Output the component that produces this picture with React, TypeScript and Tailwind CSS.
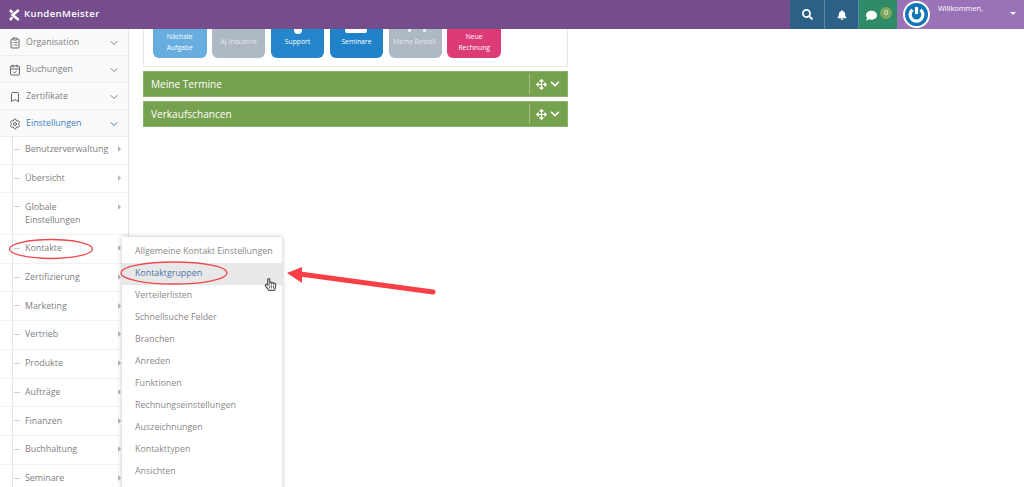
import React from "react";
import { ChevronDown, ClipboardList, CalendarCheck, Bookmark, Settings } from "lucide-react";
import { FaSearch, FaBell, FaComment, FaArrowsAlt, FaChevronDown, FaRegHandPointer } from "react-icons/fa";

const font = { fontFamily: '"Open Sans", sans-serif' };

const topItems = [
  { label: "Organisation", Icon: ClipboardList },
  { label: "Buchungen", Icon: CalendarCheck },
  { label: "Zertifikate", Icon: Bookmark },
];
const subItems = ["Benutzerverwaltung", "Übersicht", "Globale Einstellungen", "Kontakte", "Zertifizierung", "Marketing", "Vertrieb", "Produkte", "Aufträge", "Finanzen", "Buchhaltung", "Seminare"];
const menuItems = ["Allgemeine Kontakt Einstellungen", "Kontaktgruppen", "Verteilerlisten", "Schnellsuche Felder", "Branchen", "Anreden", "Funktionen", "Rechnungseinstellungen", "Auszeichnungen", "Kontakttypen", "Ansichten"];

function Tile({ lines, bg, glyph, faint }: { lines: string[]; bg: string; glyph?: React.ReactNode; faint?: boolean }) {
  return (
    <div className={`relative w-[53.5px] h-[50px] rounded-[6px] flex flex-col justify-end pb-[4px] text-[6.8px] leading-[11px] text-center ${bg} ${faint ? "text-white/70" : "text-white"}`}>
      {glyph}
      <div className="h-[25px] flex flex-col justify-center items-center">
        {lines.map((l) => <span key={l}>{l}</span>)}
      </div>
    </div>
  );
}

function Panel({ title }: { title: string }) {
  return (
    <div className="h-[26px] bg-[#76a14f] border border-[#8fb36e] flex items-center text-white">
      <span className="flex-1 pl-[7px] pt-[1px] text-[10.1px]">{title}</span>
      <span className="w-px h-[20px] bg-[#a3c088]" />
      <span className="w-[37px] flex items-center justify-center gap-[3px]">
        <FaArrowsAlt size={11} />
        <FaChevronDown size={10} />
      </span>
    </div>
  );
}

export default function App() {
  return (
    <div className="relative h-[487px] w-[1024px] overflow-hidden bg-white" style={font}>
      <header className="relative z-10 h-[29px] bg-[#754c8c] flex items-stretch text-white">
        <div className="flex-1 flex items-center pl-[9px] gap-[4px]">
          <svg width="11" height="12" viewBox="0 0 11 12" fill="none" stroke="white" strokeWidth="2.6">
            <path d="M9.8 1 L3.6 6 L9.8 11" />
            <path d="M1 1 L3.4 3.6 M1 11 L3.4 8.4" />
          </svg>
          <span className="text-[9.6px] font-semibold tracking-[0.35px]">KundenMeister</span>
        </div>
        <div className="w-[35px] bg-[#2c6187] flex items-center justify-center border-r border-[#5d86a3]"><FaSearch size={11} /></div>
        <div className="w-[34px] bg-[#2c6187] flex items-center justify-center border-r border-[#5d86a3]"><FaBell size={10} /></div>
        <div className="w-[38px] bg-[#2f8b67] flex items-center pl-[7px] gap-[3px]">
          <FaComment size={11} className="mt-[2px]" />
          <span className="w-[12px] h-[12px] -mt-[3px] rounded-full bg-[#7ea85c] text-[7px] flex items-center justify-center">0</span>
        </div>
        <div className="w-[127px] bg-[#9a72b8] flex items-start pl-[6px]">
          <svg className="mt-[1px]" width="27" height="27" viewBox="0 0 27 27" fill="none">
            <circle cx="13.5" cy="13.5" r="13.5" fill="white" />
            <circle cx="13.5" cy="13.5" r="11.5" fill="#1275b5" />
            <path d="M9.5 8.7 A6.4 6.4 0 1 0 17.5 8.7" stroke="white" strokeWidth="3.2" />
            <path d="M13.5 6 V13" stroke="white" strokeWidth="3.2" />
          </svg>
          <span className="ml-[8px] mt-[3px] flex-1 text-[7.4px] leading-[11px]">Willkommen,</span>
          <span className="mt-[12px] mr-[8px] w-0 h-0 border-x-[3.5px] border-x-transparent border-t-[3.5px] border-t-white" />
        </div>
      </header>

      <div className="flex items-start">
        <aside className="w-[129px] shrink-0 h-[458px] overflow-hidden border-r border-[#e6e9ee] text-[#808080]">
          {topItems.map(({ label, Icon }) => (
            <div key={label} className="h-[27px] bg-[#fafafa] border-b border-[#eeeeee] flex items-center pl-[9px] pr-[8px] pt-[1px] text-[8.85px]">
              <Icon size={12} className="text-[#666]" />
              <span className="ml-[5px] flex-1">{label}</span>
              <ChevronDown size={12} strokeWidth={2} className="text-[#808080]" />
            </div>
          ))}
          <div className="h-[27px] bg-[#fafafa] border-b border-[#eeeeee] flex items-center pl-[9px] pr-[8px] pt-[1px] text-[8.85px] text-[#3a7fc4]">
            <Settings size={12} className="text-[#666]" />
            <span className="ml-[5px] flex-1">Einstellungen</span>
            <ChevronDown size={12} strokeWidth={2} />
          </div>
          <div className="ml-[12px] -mt-px border-l border-[#dbe7f3]">
            {subItems.map((s) => (
              <div key={s} className="relative flex items-start border-b border-[#f1f1f1] -ml-[12px] pl-[24px] pr-[7px] py-[7.35px] text-[8.85px] leading-[13px]">
                <span className="absolute left-[13px] top-[13px] w-[6px] h-px bg-[#cfcfcf]" />
                <span className="flex-1 whitespace-pre-line">{s === "Globale Einstellungen" ? "Globale\nEinstellungen" : s}</span>
                <span className="mt-[3px] w-0 h-0 border-y-[3px] border-y-transparent border-l-[3px] border-l-[#b5b5b5]" />
              </div>
            ))}
          </div>
        </aside>

        <main className="w-[424.5px] ml-[14px] -mt-[22px]">
          <div className="h-[60px] border border-[#e9e9e9] pl-[9px] flex gap-[5.4px]">
            <Tile lines={["Nächste", "Aufgabe"]} bg="bg-[#67ade0]" />
            <Tile lines={["AJ Industrie"]} bg="bg-[#aeb9c3]" faint />
            <Tile lines={["Support"]} bg="bg-[#2586cc]" glyph={<span className="absolute left-[23px] top-[19px] w-[8px] h-[7px] rounded-b-full bg-white" />} />
            <Tile lines={["Seminare"]} bg="bg-[#2083c9]" glyph={<span className="absolute left-[15px] top-[20px] w-[22px] h-[5px] rounded-[2px] bg-white" />} />
            <Tile lines={["Meine Bestell."]} bg="bg-[#aeb9c3]" faint glyph={<><span className="absolute left-[19px] top-[20px] w-[3px] h-[4px] rounded-full bg-white/80" /><span className="absolute left-[34px] top-[20px] w-[3px] h-[4px] rounded-full bg-white/80" /></>} />
            <Tile lines={["Neue", "Rechnung"]} bg="bg-[#dd3b78]" />
          </div>
          <div className="mt-[4px]"><Panel title="Meine Termine" /></div>
          <div className="mt-[4px]"><Panel title="Verkaufschancen" /></div>
        </main>
      </div>

      <div className="absolute left-[122px] top-[237px] w-[160px] h-[260px] bg-white shadow-[0_0_5px_rgba(0,0,0,0.25)] z-20 pt-[4px] text-[8.85px] text-[#8a8a8a]">
        {menuItems.map((m) => (
          <div key={m} className={`h-[22px] pl-[13px] flex items-center whitespace-nowrap ${m === "Kontaktgruppen" ? "bg-[#e8e8e8] text-[#4a76a8]" : ""}`}>{m}</div>
        ))}
      </div>

      <svg className="absolute inset-0 z-30 pointer-events-none" width="1024" height="487" viewBox="0 0 1024 487" fill="none">
        <ellipse cx="51" cy="249" rx="41.5" ry="9.5" stroke="#f0484f" strokeWidth="1.3" />
        <ellipse cx="174" cy="273" rx="53" ry="11" stroke="#f0484f" strokeWidth="1.3" />
        <path d="M300 274 L433 292" stroke="#f73f45" strokeWidth="5" strokeLinecap="round" />
        <path d="M287 273 L302 267 L302 283 Z" fill="#f73f45" />
      </svg>
      <FaRegHandPointer size={13} className="absolute z-30 left-[264px] top-[278px] text-[#555]" />
    </div>
  );
}
